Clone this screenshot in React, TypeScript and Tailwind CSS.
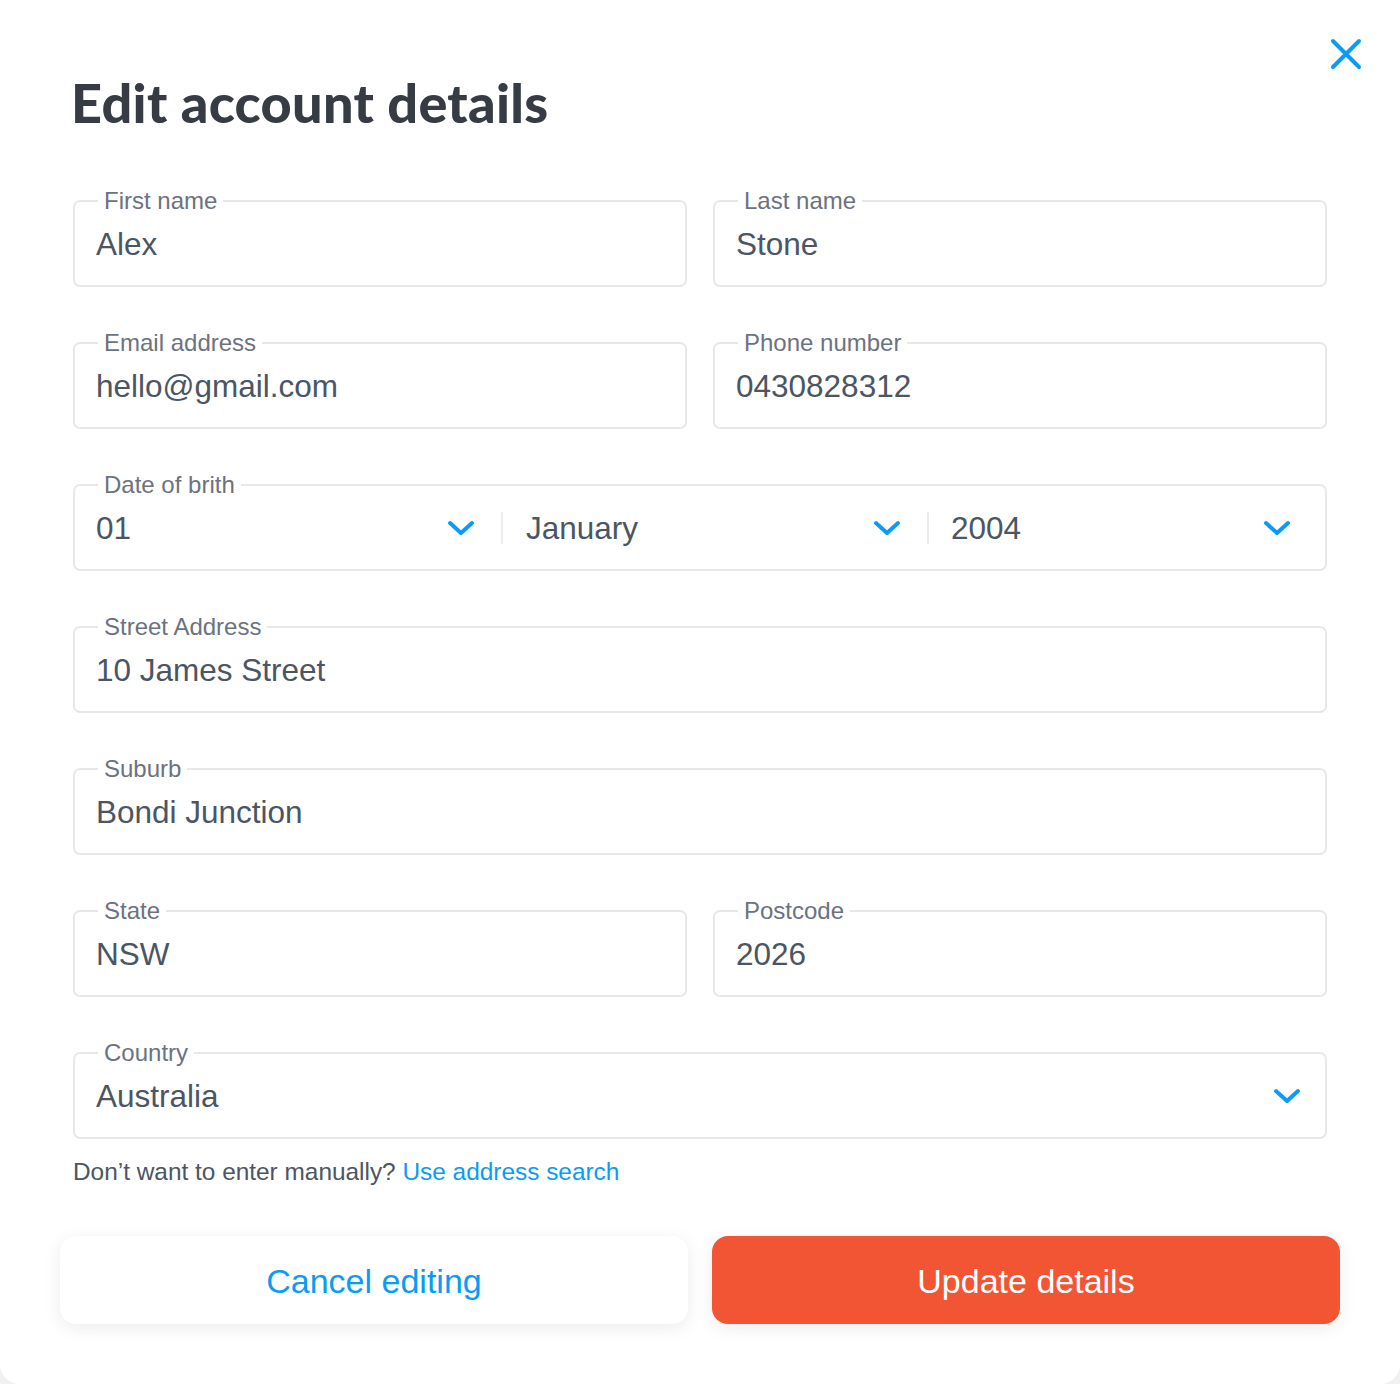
import { ReactNode } from "react";

const BLUE = "text-[#0a9cf5]";

function Chevron({ className = "" }: { className?: string }) {
  return (
    <svg
      width="28"
      height="18"
      viewBox="0 0 28 18"
      fill="none"
      className={`${BLUE} ${className}`}
      aria-hidden
    >
      <path
        d="M3 4l11 10L25 4"
        stroke="currentColor"
        strokeWidth="4"
        strokeLinecap="round"
        strokeLinejoin="round"
      />
    </svg>
  );
}

function Field({ label, children }: { label: string; children: ReactNode }) {
  return (
    <div className="relative flex h-[87px] items-center rounded-[7px] border-2 border-[#e8e8e8] bg-white">
      <span className="absolute -top-[15px] left-[23px] bg-white px-[6px] text-[24px] leading-[28px] text-[#6b7280]">
        {label}
      </span>
      {children}
    </div>
  );
}

function TextField({ label, value }: { label: string; value: string }) {
  return (
    <Field label={label}>
      <span className="pl-[21px] pt-[3px] text-[31.5px] text-[#4b5563]">{value}</span>
    </Field>
  );
}

function Segment({
  value,
  className,
}: {
  value: string;
  className: string;
}) {
  return (
    <div className={`flex items-center justify-between ${className}`}>
      <span className="pt-[3px] text-[31.5px] text-[#4b5563]">{value}</span>
      <Chevron />
    </div>
  );
}

export default function App() {
  return (
    <div
      className="min-h-[1384px] bg-[#f1f1f1]"
      style={{ fontFamily: '"Liberation Sans", Arial, sans-serif' }}
    >
      <div className="relative h-[1384px] rounded-b-[20px] bg-white px-[73px] pt-[72px]">
        <button
          type="button"
          aria-label="Close"
          className={`absolute right-[37px] top-[37px] ${BLUE}`}
        >
          <svg width="34" height="34" viewBox="0 0 34 34" fill="none">
            <path
              d="M4 4l26 26M30 4L4 30"
              stroke="currentColor"
              strokeWidth="4"
              strokeLinecap="round"
            />
          </svg>
        </button>

        <h1
          className="-ml-[2px] text-[54px] font-black leading-[62px] tracking-[0.3px] text-[#363b44]"
          style={{ fontFamily: "Lato, sans-serif" }}
        >
          Edit account details
        </h1>

        <form className="mt-[66px] flex flex-col gap-[55px]">
          <div className="grid grid-cols-2 gap-[26px]">
            <TextField label="First name" value="Alex" />
            <TextField label="Last name" value="Stone" />
          </div>
          <div className="grid grid-cols-2 gap-[26px]">
            <TextField label="Email address" value="hello@gmail.com" />
            <TextField label="Phone number" value="0430828312" />
          </div>

          <Field label="Date of brith">
            <Segment value="01" className="w-[426px] pl-[21px] pr-[26px]" />
            <div className="h-[32px] w-[2px] bg-[#ececec]" />
            <Segment value="January" className="w-[424px] pl-[23px] pr-[26px]" />
            <div className="h-[32px] w-[2px] bg-[#ececec]" />
            <Segment value="2004" className="flex-1 pl-[22px] pr-[34px]" />
          </Field>

          <TextField label="Street Address" value="10 James Street" />
          <TextField label="Suburb" value="Bondi Junction" />

          <div className="grid grid-cols-2 gap-[26px]">
            <TextField label="State" value="NSW" />
            <TextField label="Postcode" value="2026" />
          </div>

          <Field label="Country">
            <div className="flex flex-1 items-center justify-between pl-[21px] pr-[24px]">
              <span className="pt-[3px] text-[31.5px] text-[#4b5563]">Australia</span>
              <Chevron />
            </div>
          </Field>
        </form>

        <p className="mt-[19px] text-[24.4px] leading-[28px] text-[#4b5563]">
          Don’t want to enter manually?{" "}
          <a href="#" className={BLUE}>
            Use address search
          </a>
        </p>

        <div className="-mx-[13px] mt-[50px] grid grid-cols-2 gap-[24px]">
          <button
            type="button"
            className={`h-[88px] rounded-[16px] bg-white pt-[3px] text-[34px] shadow-[0_4px_18px_rgba(0,0,0,0.08)] ${BLUE}`}
          >
            Cancel editing
          </button>
          <button
            type="button"
            className="h-[88px] rounded-[16px] bg-[#f25533] pt-[3px] text-[34px] text-white shadow-[0_4px_18px_rgba(0,0,0,0.08)]"
          >
            Update details
          </button>
        </div>
      </div>
    </div>
  );
}
